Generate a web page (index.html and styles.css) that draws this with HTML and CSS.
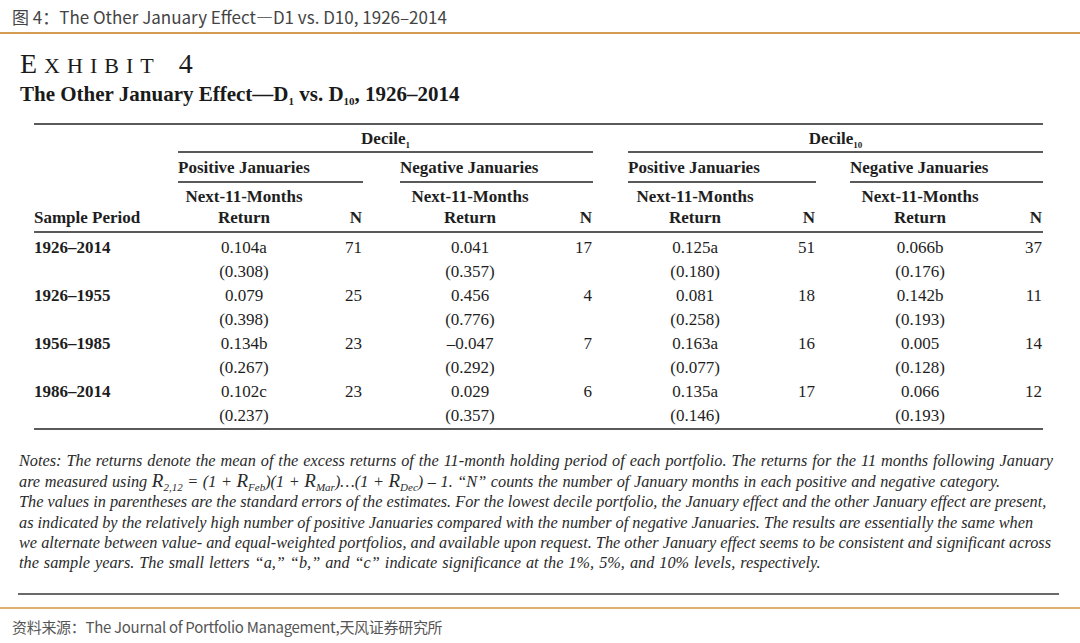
FILE: index.html
```html
<!DOCTYPE html>
<html lang="zh-CN">
<head>
<meta charset="utf-8">
<title>Exhibit 4</title>
<link rel="stylesheet" href="styles.css">
</head>
<body>
<header class="fig-title">图 4：The Other January Effect—D1 vs. D10, 1926–2014</header>
<main class="exhibit">
  <h1 class="ex-label"><span class="ex-big">E</span><span class="ex-small">XHIBIT</span><span class="ex-num">4</span></h1>
  <h2 class="ex-sub">The Other January Effect—D<sub>1</sub> vs. D<sub>10</sub>, 1926–2014</h2>
  <table class="data">
    <colgroup>
      <col class="c-label"><col class="c-ret1"><col class="c-n"><col class="c-gap1"><col class="c-ret2"><col class="c-n"><col class="c-gap2"><col class="c-ret3"><col class="c-n3"><col class="c-gap3"><col class="c-ret2"><col class="c-n">
    </colgroup>
    <thead>
      <tr class="r-decile">
        <th></th>
        <th colspan="5" class="rule">Decile<sub>1</sub></th>
        <th></th>
        <th colspan="5" class="rule">Decile<sub>10</sub></th>
      </tr>
      <tr class="r-sign">
        <th></th>
        <th colspan="2" class="rule left">Positive Januaries</th>
        <th></th>
        <th colspan="2" class="rule left">Negative Januaries</th>
        <th></th>
        <th colspan="2" class="rule left">Positive Januaries</th>
        <th></th>
        <th colspan="2" class="rule left">Negative Januaries</th>
      </tr>
      <tr class="r-cols">
        <th class="left">Sample Period</th>
        <th>Next-11-Months<br>Return</th>
        <th class="num">N</th>
        <th></th>
        <th>Next-11-Months<br>Return</th>
        <th class="num">N</th>
        <th></th>
        <th>Next-11-Months<br>Return</th>
        <th class="num">N</th>
        <th></th>
        <th>Next-11-Months<br>Return</th>
        <th class="num">N</th>
      </tr>
    </thead>
    <tbody>
      <tr class="first">
        <th class="left">1926–2014</th>
        <td>0.104a</td><td class="num">71</td><td></td>
        <td>0.041</td><td class="num">17</td><td></td>
        <td>0.125a</td><td class="num">51</td><td></td>
        <td>0.066b</td><td class="num">37</td>
      </tr>
      <tr>
        <th></th>
        <td>(0.308)</td><td></td><td></td>
        <td>(0.357)</td><td></td><td></td>
        <td>(0.180)</td><td></td><td></td>
        <td>(0.176)</td><td></td>
      </tr>
      <tr>
        <th class="left">1926–1955</th>
        <td>0.079</td><td class="num">25</td><td></td>
        <td>0.456</td><td class="num">4</td><td></td>
        <td>0.081</td><td class="num">18</td><td></td>
        <td>0.142b</td><td class="num">11</td>
      </tr>
      <tr>
        <th></th>
        <td>(0.398)</td><td></td><td></td>
        <td>(0.776)</td><td></td><td></td>
        <td>(0.258)</td><td></td><td></td>
        <td>(0.193)</td><td></td>
      </tr>
      <tr>
        <th class="left">1956–1985</th>
        <td>0.134b</td><td class="num">23</td><td></td>
        <td>–0.047</td><td class="num">7</td><td></td>
        <td>0.163a</td><td class="num">16</td><td></td>
        <td>0.005</td><td class="num">14</td>
      </tr>
      <tr>
        <th></th>
        <td>(0.267)</td><td></td><td></td>
        <td>(0.292)</td><td></td><td></td>
        <td>(0.077)</td><td></td><td></td>
        <td>(0.128)</td><td></td>
      </tr>
      <tr>
        <th class="left">1986–2014</th>
        <td>0.102c</td><td class="num">23</td><td></td>
        <td>0.029</td><td class="num">6</td><td></td>
        <td>0.135a</td><td class="num">17</td><td></td>
        <td>0.066</td><td class="num">12</td>
      </tr>
      <tr class="last">
        <th></th>
        <td>(0.237)</td><td></td><td></td>
        <td>(0.357)</td><td></td><td></td>
        <td>(0.146)</td><td></td><td></td>
        <td>(0.193)</td><td></td>
      </tr>
    </tbody>
  </table>
  <p class="notes">
    <span class="ln wide">Notes: The returns denote the mean of the excess returns of the 11-month holding period of each portfolio. The returns for the 11 months following January</span>
    <span class="ln mid">are measured using <span class="big-r">R</span><sub>2,12</sub> = (1 + <span class="big-r">R</span><sub>Feb</sub>)(1 + <span class="big-r">R</span><sub>Mar</sub>)…(1 + <span class="big-r">R</span><sub>Dec</sub>) – 1. “N” counts the number of January months in each positive and negative category.</span>
    <span class="ln">The values in parentheses are the standard errors of the estimates. For the lowest decile portfolio, the January effect and the other January effect are present,</span>
    <span class="ln">as indicated by the relatively high number of positive Januaries compared with the number of negative Januaries. The results are essentially the same when</span>
    <span class="ln">we alternate between value- and equal-weighted portfolios, and available upon request. The other January effect seems to be consistent and significant across</span>
    <span class="ln wide">the sample years. The small letters “a,” “b,” and “c” indicate significance at the 1%, 5%, and 10% levels, respectively.</span>
  </p>
  <hr class="end-rule">
</main>
<footer class="source">资料来源：The Journal of Portfolio Management,天风证券研究所</footer>
</body>
</html>
```
FILE: styles.css
```css
html, body {
  margin: 0;
  padding: 0;
  background: #ffffff;
}

body {
  width: 1080px;
  height: 643px;
  overflow: hidden;
  font-family: "Liberation Serif", "Times New Roman", serif;
  color: #1e1e1e;
}

/* ---------- top caption ---------- */
.fig-title {
  box-sizing: border-box;
  height: 34px;
  padding: 2px 0 0 12px;
  line-height: 30px;
  font-family: "Noto Sans CJK SC", "Noto Sans", sans-serif;
  font-size: 17px;
  color: #444444;
  border-bottom: 2px solid #d39c50;
  white-space: nowrap;
}

/* ---------- exhibit block ---------- */
.ex-label {
  margin: 14px 0 0 20px;
  height: 28px;
  line-height: 28px;
  font-weight: normal;
  color: #1a1a1a;
  white-space: nowrap;
}

.ex-big {
  font-size: 28px;
  letter-spacing: 7px;
}

.ex-small {
  font-size: 22px;
  letter-spacing: 7px;
}

.ex-num {
  font-size: 28px;
  margin-left: 18px;
}

.ex-sub {
  margin: 6px 0 0 20px;
  height: 24px;
  line-height: 24px;
  font-size: 21px;
  font-weight: bold;
  color: #1a1a1a;
  white-space: nowrap;
}

.ex-sub sub {
  font-size: 11px;
  vertical-align: -4px;
  line-height: 0;
}

/* ---------- table ---------- */
.data {
  margin: 17px 0 0 34px;
  width: 1009px;
  table-layout: fixed;
  border-collapse: separate;
  border-spacing: 0;
  border-top: 2px solid #5a5a5a;
  border-bottom: 2px solid #5a5a5a;
  font-size: 17px;
  color: #1e1e1e;
}

.c-label { width: 144px; }
.c-ret1 { width: 132px; }
.c-n { width: 53px; }
.c-n3 { width: 54px; }
.c-gap1 { width: 37px; }
.c-ret2 { width: 140px; }
.c-gap2 { width: 35px; }
.c-ret3 { width: 134px; }
.c-gap3 { width: 34px; }

.data th,
.data td {
  padding: 0;
  text-align: center;
  white-space: nowrap;
}

.data thead th {
  font-weight: bold;
  vertical-align: bottom;
}

.data .left { text-align: left; }
.data .num { text-align: right; padding-right: 1px; }

.data .rule {
  border-bottom: 2px solid #5a5a5a;
}

.r-decile th {
  height: 24px;
  line-height: 20px;
  padding-bottom: 2px;
}

.r-decile sub {
  font-size: 9px;
  vertical-align: -4px;
  line-height: 0;
}

.r-sign th {
  height: 25px;
  line-height: 20px;
  padding-bottom: 3px;
}

.r-cols th {
  height: 42px;
  line-height: 21px;
  padding-top: 3px;
  padding-bottom: 3px;
  border-bottom: 2px solid #5a5a5a;
}

.data tbody th {
  font-weight: bold;
  text-align: left;
}

.data tbody th,
.data tbody td {
  height: 24px;
  line-height: 24px;
}

.data tbody tr.first th,
.data tbody tr.first td {
  padding-top: 3px;
}

/* ---------- notes ---------- */
.notes {
  margin: 21px 0 0 19px;
  font-style: italic;
  font-size: 16.3px;
  line-height: 20.2px;
  color: #2a2a2a;
}

.notes .ln {
  display: block;
  white-space: nowrap;
}

.notes .wide {
  word-spacing: 0.9px;
}

.notes .mid {
  word-spacing: 0.5px;
}

.notes sub {
  font-size: 11px;
  vertical-align: -4px;
  line-height: 0;
}

.notes .big-r {
  font-size: 19px;
}

.end-rule {
  margin: 20px 0 0 18px;
  width: 1041px;
  height: 0;
  border: 0;
  border-top: 2px solid #6a6a6a;
}

/* ---------- footer ---------- */
.source {
  margin-top: 12px;
  padding: 3px 0 0 12px;
  line-height: 30px;
  border-top: 2px solid #deb06e;
  font-family: "Noto Sans CJK SC", "Noto Sans", sans-serif;
  font-size: 15px;
  letter-spacing: -0.3px;
  color: #555555;
  white-space: nowrap;
}
```
